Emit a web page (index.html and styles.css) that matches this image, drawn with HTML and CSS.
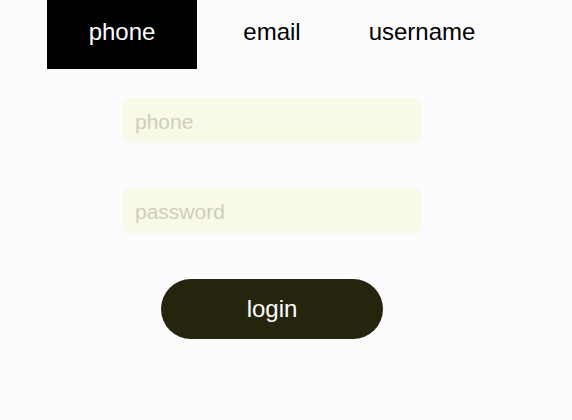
FILE: index.html
```html
<!DOCTYPE html>
<html>
<head>
<meta charset="utf-8">
<link rel="stylesheet" href="styles.css">
</head>
<body>
<div class="page">
  <nav class="tabs">
    <div class="tab active">phone</div>
    <div class="tab">email</div>
    <div class="tab">username</div>
  </nav>
  <form class="form">
    <input class="field" type="text" placeholder="phone">
    <input class="field" type="password" placeholder="password">
    <button class="login" type="button">login</button>
  </form>
</div>
</body>
</html>
```
FILE: styles.css
```css
html, body {
  margin: 0;
  padding: 0;
  background: #fcfcff;
  font-family: "Liberation Sans", Arial, sans-serif;
}
.page {
  width: 450px;
  margin-left: 47px;
}
.tabs {
  display: flex;
  height: 69px;
}
.tab {
  width: 150px;
  display: flex;
  align-items: center;
  justify-content: center;
  font-size: 24px;
  color: #000;
  padding-bottom: 6px;
  box-sizing: border-box;
}
.tab.active {
  background: #000;
  color: #fff;
}
.form {
  display: flex;
  flex-direction: column;
  align-items: center;
  padding-top: 29px;
}
.field {
  width: 300px;
  height: 45px;
  box-sizing: border-box;
  border: none;
  outline: none;
  border-radius: 8px;
  background: #f9f9ea;
  padding: 3px 13px 0;
  font-family: "Liberation Sans", Arial, sans-serif;
  font-size: 21px;
  margin-bottom: 45px;
}
.field::placeholder {
  color: #cfcfb8;
}
.login {
  margin-top: 1px;
  width: 222px;
  height: 60px;
  border: none;
  border-radius: 30px;
  background: #25250d;
  color: #fff;
  font-family: "Liberation Sans", Arial, sans-serif;
  font-size: 24px;
}
```
